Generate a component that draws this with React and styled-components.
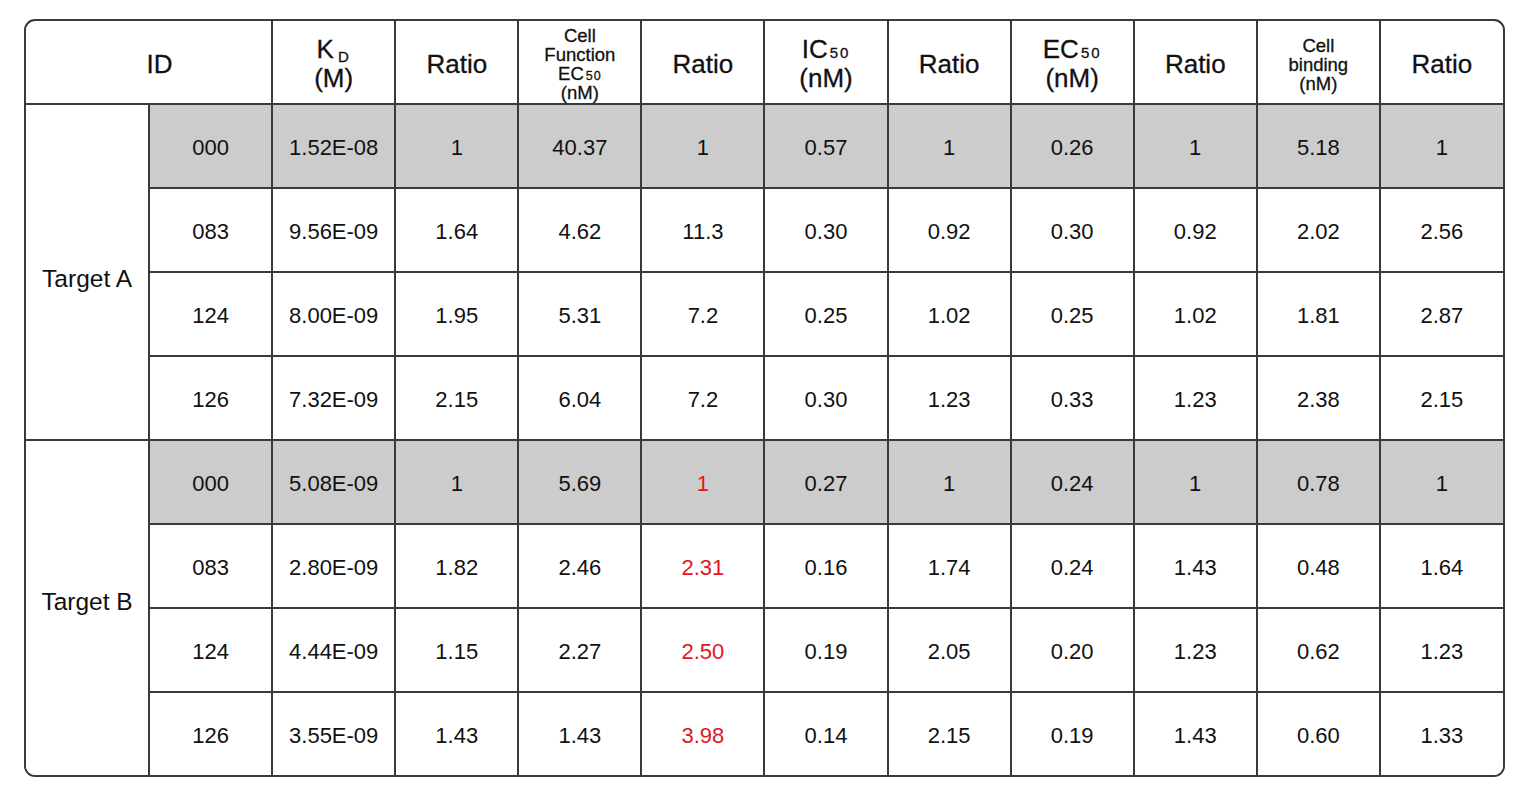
import styled, { createGlobalStyle } from "styled-components";

const GlobalStyle = createGlobalStyle`
  html, body {
    margin: 0;
    padding: 0;
    background: #ffffff;
  }
  body {
    font-family: "Liberation Sans", Arial, sans-serif;
    color: #111111;
  }
`;

const groups = [
  {
    name: "Target A",
    shift: "down",
    red: false,
    rows: [
      ["000", "1.52E-08", "1", "40.37", "1", "0.57", "1", "0.26", "1", "5.18", "1"],
      ["083", "9.56E-09", "1.64", "4.62", "11.3", "0.30", "0.92", "0.30", "0.92", "2.02", "2.56"],
      ["124", "8.00E-09", "1.95", "5.31", "7.2", "0.25", "1.02", "0.25", "1.02", "1.81", "2.87"],
      ["126", "7.32E-09", "2.15", "6.04", "7.2", "0.30", "1.23", "0.33", "1.23", "2.38", "2.15"],
    ],
  },
  {
    name: "Target B",
    shift: "up",
    red: true,
    rows: [
      ["000", "5.08E-09", "1", "5.69", "1", "0.27", "1", "0.24", "1", "0.78", "1"],
      ["083", "2.80E-09", "1.82", "2.46", "2.31", "0.16", "1.74", "0.24", "1.43", "0.48", "1.64"],
      ["124", "4.44E-09", "1.15", "2.27", "2.50", "0.19", "2.05", "0.20", "1.23", "0.62", "1.23"],
      ["126", "3.55E-09", "1.43", "1.43", "3.98", "0.14", "2.15", "0.19", "1.43", "0.60", "1.33"],
    ],
  },
];

const Page = styled.div`
  padding: 19px 21px 0 24px;
`;

const Frame = styled.div`
  width: 1481px;
  height: 758px;
  box-sizing: border-box;
  border: 2px solid #3a3a3a;
  border-radius: 11px;
  overflow: hidden;
`;

const Table = styled.table`
  width: 100%;
  height: 100%;
  border-collapse: collapse;
  border-style: hidden;
  table-layout: fixed;
`;

const HeadRow = styled.tr`
  height: 83px;
`;

const BodyRow = styled.tr`
  height: 84px;
`;

const HeadCell = styled.th`
  border: 2px solid #3a3a3a;
  padding: ${(p) => (p.$indent ? "4px 0 0 22px" : "4px 0 0")};
  font-weight: normal;
  font-size: ${(p) => (p.$small ? "18.5px" : "26px")};
  line-height: ${(p) => (p.$small ? "19px" : "29px")};
  text-align: center;
  vertical-align: middle;
  color: #111111;
  -webkit-text-stroke: 0.3px #111111;
`;

const Cell = styled.td`
  border: 2px solid #3a3a3a;
  padding: 3px 0 0;
  font-size: 22px;
  text-align: center;
  vertical-align: middle;
  background: ${(p) => (p.$shaded ? "#cccccc" : "#ffffff")};
  color: ${(p) => (p.$red ? "#e3161d" : "#111111")};
`;

const GroupCell = styled.td`
  border: 2px solid #3a3a3a;
  font-size: 24.5px;
  text-align: center;
  vertical-align: middle;
  background: #ffffff;
  padding: ${(p) => (p.$shift === "down" ? "14px 0 0" : "0 0 14px")};
`;

const Sub = styled.span`
  font-size: ${(p) => (p.$tight ? "12.5px" : "15px")};
  letter-spacing: ${(p) => (p.$tight ? "1px" : "2px")};
  line-height: 0;
  margin-left: ${(p) => (p.$low ? "4px" : "2px")};
  vertical-align: ${(p) => (p.$low ? "-4px" : "0")};
`;

const App = () => {
  return (
    <>
      <GlobalStyle />
      <Page>
        <Frame>
          <Table>
            <thead>
              <HeadRow>
                <HeadCell colSpan={2} $indent>
                  ID
                </HeadCell>
                <HeadCell>
                  K<Sub $low>D</Sub>
                  <br />
                  (M)
                </HeadCell>
                <HeadCell>Ratio</HeadCell>
                <HeadCell $small>
                  Cell
                  <br />
                  Function
                  <br />
                  EC<Sub $tight>50</Sub>
                  <br />
                  (nM)
                </HeadCell>
                <HeadCell>Ratio</HeadCell>
                <HeadCell>
                  IC<Sub>50</Sub>
                  <br />
                  (nM)
                </HeadCell>
                <HeadCell>Ratio</HeadCell>
                <HeadCell>
                  EC<Sub>50</Sub>
                  <br />
                  (nM)
                </HeadCell>
                <HeadCell>Ratio</HeadCell>
                <HeadCell $small>
                  Cell
                  <br />
                  binding
                  <br />
                  (nM)
                </HeadCell>
                <HeadCell>Ratio</HeadCell>
              </HeadRow>
            </thead>
            <tbody>
              {groups.map((group) =>
                group.rows.map((row, i) => (
                  <BodyRow key={group.name + row[0]}>
                    {i === 0 && (
                      <GroupCell rowSpan={group.rows.length} $shift={group.shift}>
                        {group.name}
                      </GroupCell>
                    )}
                    {row.map((value, j) => (
                      <Cell
                        key={j}
                        $shaded={i === 0}
                        $red={group.red && j === 4}
                      >
                        {value}
                      </Cell>
                    ))}
                  </BodyRow>
                ))
              )}
            </tbody>
          </Table>
        </Frame>
      </Page>
    </>
  );
};

export default App;
